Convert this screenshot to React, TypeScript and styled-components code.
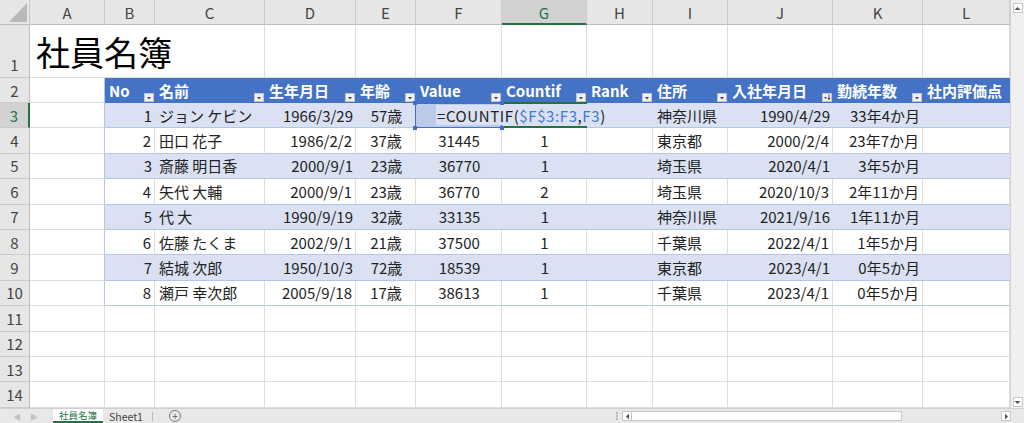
import React from 'react';
import styled, { createGlobalStyle, css } from 'styled-components';

const COLS = [30, 75, 50, 110, 91, 60, 86, 85, 66, 75, 105, 90, 87];
const LETTERS = ['A', 'B', 'C', 'D', 'E', 'F', 'G', 'H', 'I', 'J', 'K', 'L'];
const ROW_H = 25.4;

type Align = 'left' | 'right' | 'center';
type Kind = 'plain' | 'band' | 'white';

// alignment per data column, B..L
const ALIGN: Align[] = ['right', 'left', 'right', 'center', 'center', 'center', 'left', 'left', 'right', 'right', 'left'];

const HEADERS = ['No', '名前', '生年月日', '年齢', 'Value', 'Countif', 'Rank', '住所', '入社年月日', '勤続年数', '社内評価点'];

const ROWS: string[][] = [
  ['1', 'ジョン ケビン', '1966/3/29', '57歳', '', '', '', '神奈川県', '1990/4/29', '33年4か月', ''],
  ['2', '田口 花子', '1986/2/2', '37歳', '31445', '1', '', '東京都', '2000/2/4', '23年7か月', ''],
  ['3', '斎藤 明日香', '2000/9/1', '23歳', '36770', '1', '', '埼玉県', '2020/4/1', '3年5か月', ''],
  ['4', '矢代 大輔', '2000/9/1', '23歳', '36770', '2', '', '埼玉県', '2020/10/3', '2年11か月', ''],
  ['5', '代 大', '1990/9/19', '32歳', '33135', '1', '', '神奈川県', '2021/9/16', '1年11か月', ''],
  ['6', '佐藤 たくま', '2002/9/1', '21歳', '37500', '1', '', '千葉県', '2022/4/1', '1年5か月', ''],
  ['7', '結城 次郎', '1950/10/3', '72歳', '18539', '1', '', '東京都', '2023/4/1', '0年5か月', ''],
  ['8', '瀬戸 幸次郎', '2005/9/18', '17歳', '38613', '1', '', '千葉県', '2023/4/1', '0年5か月', ''],
];

const GRID = '#dedede';
const BAND = '#d9e1f2';
const BAND_LINE = '#b4c6e7';
const HEAD_BLUE = '#4472c4';
const XL_GREEN = '#217346';

const GlobalStyle = createGlobalStyle`
  html, body {
    margin: 0;
    padding: 0;
    background: #fff;
    overflow: hidden;
  }
  body {
    font-family: "Noto Sans CJK JP", "Noto Sans", sans-serif;
  }
`;

const Window = styled.div`
  width: 1024px;
  height: 423px;
  display: flex;
  flex-direction: column;
  overflow: hidden;
`;

const Main = styled.div`
  display: flex;
  height: 408px;
`;

const Sheet = styled.div`
  flex: none;
  width: 1010px;
  display: grid;
  grid-template-columns: ${COLS.map(c => `${c}px`).join(' ')};
  grid-template-rows: 25px 53px 25px repeat(12, ${ROW_H}px);
  overflow: hidden;
`;

const Corner = styled.div`
  background: #e6e6e6;
  border-right: 1px solid #c8c8c8;
  border-bottom: 1px solid #bdbdbd;
  box-sizing: border-box;
  svg {
    display: block;
  }
`;

const ColHead = styled.div<{ $active?: boolean }>`
  box-sizing: border-box;
  background: ${p => (p.$active ? '#d2d2d2' : '#e6e6e6')};
  border-right: 1px solid #cbcbcb;
  border-bottom: ${p => (p.$active ? `2px solid ${XL_GREEN}` : '1px solid #bdbdbd')};
  color: ${p => (p.$active ? XL_GREEN : '#444')};
  font-size: 15px;
  display: flex;
  align-items: center;
  justify-content: center;
  padding-top: ${p => (p.$active ? 1 : 0)}px;
`;

const RowHead = styled.div<{ $active?: boolean; $tall?: boolean }>`
  box-sizing: border-box;
  background: ${p => (p.$active ? '#d2d2d2' : '#e6e6e6')};
  border-right: ${p => (p.$active ? `2px solid ${XL_GREEN}` : '1px solid #bdbdbd')};
  border-bottom: 1px solid #cbcbcb;
  color: ${p => (p.$active ? XL_GREEN : '#444')};
  font-size: 15px;
  display: flex;
  justify-content: center;
  align-items: ${p => (p.$tall ? 'flex-end' : 'center')};
  padding-bottom: ${p => (p.$tall ? 2 : 0)}px;
`;

const Cell = styled.div<{ $kind?: Kind; $align?: Align; $edge?: boolean }>`
  box-sizing: border-box;
  position: relative;
  min-width: 0;
  display: flex;
  align-items: center;
  padding: 0 3px 0 4px;
  font-size: 15px;
  color: #222;
  white-space: nowrap;
  justify-content: ${p => (p.$align === 'right' ? 'flex-end' : p.$align === 'center' ? 'center' : 'flex-start')};
  ${p =>
    p.$kind === 'band'
      ? css`
          background: ${BAND};
          border-bottom: 1px solid ${BAND_LINE};
        `
      : p.$kind === 'white'
      ? css`
          background: #fff;
          border-right: 1px solid ${GRID};
          border-bottom: 1px solid ${BAND_LINE};
        `
      : css`
          background: #fff;
          border-right: 1px solid ${p.$edge ? BAND_LINE : GRID};
          border-bottom: 1px solid ${GRID};
        `}
`;

const TitleCell = styled.div`
  grid-column: span 3;
  box-sizing: border-box;
  border-right: 1px solid ${GRID};
  border-bottom: 1px solid ${GRID};
  display: flex;
  align-items: flex-end;
  padding: 0 0 8px 6px;
  font-size: 34px;
  line-height: 1;
  color: #000;
`;

const HeadCell = styled.div`
  box-sizing: border-box;
  position: relative;
  background: ${HEAD_BLUE};
  color: #fff;
  font-weight: 700;
  font-size: 15px;
  display: flex;
  align-items: center;
  padding: 0 4px;
  white-space: nowrap;
`;

const FilterBtn = styled.div`
  position: absolute;
  right: 1px;
  bottom: 1px;
  width: 10px;
  height: 9px;
  box-sizing: border-box;
  background: #f0f0f0;
  border: 1px solid #c4c4c4;
  svg {
    display: block;
  }
`;

const RefCell = styled(Cell)`
  background: #bccbe9;
  &::after {
    content: '';
    position: absolute;
    inset: 0 0 -1px -1px;
    border: 1px solid #3d6fd1;
  }
`;

const Handle = styled.span<{ $x: 'l' | 'r'; $y: 't' | 'b' }>`
  position: absolute;
  width: 4px;
  height: 4px;
  background: #3d6fd1;
  z-index: 4;
  ${p => (p.$x === 'l' ? 'left: -3px;' : 'right: -2px;')}
  ${p => (p.$y === 't' ? 'top: -2px;' : 'bottom: -3px;')}
`;

const ActiveCell = styled(Cell)`
  &::before,
  &::after {
    content: '';
    position: absolute;
    left: 0;
    right: 0;
    height: 2px;
    background: ${XL_GREEN};
    z-index: 3;
  }
  &::before {
    top: -1px;
  }
  &::after {
    bottom: -1px;
  }
`;

const EditBox = styled.div`
  position: absolute;
  left: 20px;
  top: 2px;
  bottom: 2px;
  width: 180px;
  z-index: 2;
  background: ${BAND};
  display: flex;
  align-items: center;
  padding-left: 1px;
  font-size: 15px;
  letter-spacing: 0.6px;
  color: #222;
  white-space: nowrap;
`;

const Ref = styled.span`
  color: #3e78d6;
`;

const VScroll = styled.div`
  flex: none;
  width: 14px;
  box-sizing: border-box;
  background: #f0f0f0;
  border-left: 1px solid #d2d2d2;
  display: flex;
  flex-direction: column;
  justify-content: space-between;
  align-items: center;
  padding: 3px 0 1px;
`;

const ArrowBtn = styled.div`
  width: 10px;
  height: 10px;
  box-sizing: border-box;
  background: #fff;
  border: 1px solid #c8c8c8;
  display: flex;
  align-items: center;
  justify-content: center;
  svg {
    display: block;
  }
`;

const TabBar = styled.div`
  flex: none;
  height: 15px;
  background: #e8e8e8;
  border-top: 1px solid #d0d0d0;
  box-sizing: border-box;
  display: flex;
  align-items: stretch;
  font-size: 10.5px;
  color: #444;
  white-space: nowrap;
`;

const NavArrows = styled.div`
  width: 53px;
  display: flex;
  align-items: center;
  gap: 9px;
  padding-left: 13px;
  box-sizing: border-box;
  color: #c2c2c2;
  font-size: 8px;
`;

const Tab = styled.div<{ $active?: boolean }>`
  display: flex;
  align-items: center;
  justify-content: center;
  box-sizing: border-box;
  padding: 0 6px;
  ${p =>
    p.$active &&
    css`
      width: 50px;
      padding: 0;
      font-size: 9.5px;
      background: #fff;
      color: ${XL_GREEN};
      border-bottom: 2px solid ${XL_GREEN};
    `}
`;

const TabSep = styled.div`
  width: 1px;
  height: 9px;
  align-self: center;
  background: #bdbdbd;
  margin-left: 3px;
`;

const AddSheet = styled.div`
  width: 10px;
  height: 10px;
  align-self: center;
  margin-left: 16px;
  border: 1px solid #7a7a7a;
  border-radius: 50%;
  display: flex;
  align-items: center;
  justify-content: center;
  font-size: 10px;
  line-height: 1;
  color: #555;
`;

const Grip = styled.div`
  margin-left: auto;
  width: 10px;
  display: flex;
  flex-direction: column;
  align-items: center;
  justify-content: center;
  gap: 1px;
  span {
    width: 2px;
    height: 2px;
    background: #b5b5b5;
  }
`;

const HScroll = styled.div`
  width: 389px;
  display: flex;
  align-items: center;
  margin-right: 13px;
`;

const Thumb = styled.div`
  width: 270px;
  height: 10px;
  box-sizing: border-box;
  background: #fff;
  border: 1px solid #c8c8c8;
  border-left: none;
`;

const Track = styled.div`
  flex: 1;
`;

const Tri = ({ dir, color = '#555' }: { dir: 'up' | 'down' | 'left' | 'right'; color?: string }) => {
  const pts = {
    up: '0.5,4 3.5,1 6.5,4',
    down: '0.5,1 3.5,4 6.5,1',
    left: '4,0.5 1,3.5 4,6.5',
    right: '1,0.5 4,3.5 1,6.5',
  }[dir];
  const w = dir === 'up' || dir === 'down' ? 7 : 5;
  const h = dir === 'up' || dir === 'down' ? 5 : 7;
  return (
    <svg width={w} height={h} viewBox={`0 0 ${w} ${h}`}>
      <polygon points={pts} fill={color} />
    </svg>
  );
};

const FilterIcon = ({ sorted }: { sorted?: boolean }) =>
  sorted ? (
    <svg width="8" height="7" viewBox="0 0 8 7">
      <polygon points="1,3 4,3 2.5,5" fill="#444" />
      <rect x="5.5" y="0.5" width="1" height="5" fill="#444" />
      <polygon points="4.5,4 7.5,4 6,6" fill="#444" />
    </svg>
  ) : (
    <svg width="8" height="7" viewBox="0 0 8 7">
      <polygon points="2,3 6,3 4,5.5" fill="#444" />
    </svg>
  );

const App: React.FC = () => {
  const rows: React.ReactNode[] = [];

  // column letters
  rows.push(
    <Corner key="corner">
      <svg width="29" height="24" viewBox="0 0 29 24">
        <polygon points="9,22 27,22 27,3" fill="#b9b9b9" />
      </svg>
    </Corner>
  );
  LETTERS.forEach(l =>
    rows.push(
      <ColHead key={`h${l}`} $active={l === 'G'}>
        {l}
      </ColHead>
    )
  );

  for (let r = 1; r <= 14; r++) {
    rows.push(
      <RowHead key={`r${r}`} $active={r === 3} $tall={r === 1}>
        {r}
      </RowHead>
    );

    if (r === 1) {
      rows.push(<TitleCell key="title">社員名簿</TitleCell>);
      for (let c = 3; c < 12; c++) rows.push(<Cell key={`1-${c}`} />);
      continue;
    }

    if (r === 2) {
      rows.push(<Cell key="2-0" $edge />);
      HEADERS.forEach((h, i) =>
        rows.push(
          <HeadCell key={`th${i}`}>
            {h}
            {i < 10 && (
              <FilterBtn>
                <FilterIcon sorted={i === 8} />
              </FilterBtn>
            )}
          </HeadCell>
        )
      );
      continue;
    }

    if (r <= 10) {
      const data = ROWS[r - 3];
      const kind: Kind = r % 2 === 1 ? 'band' : 'white';
      rows.push(<Cell key={`${r}-0`} $edge />);
      data.forEach((v, i) => {
        const key = `${r}-${i + 1}`;
        if (r === 3 && i === 4) {
          rows.push(
            <RefCell key={key} $kind={kind}>
              <Handle $x="l" $y="t" />
              <Handle $x="r" $y="t" />
              <Handle $x="l" $y="b" />
              <Handle $x="r" $y="b" />
              <EditBox>
                =COUNTIF(<Ref>$F$3:F3</Ref>,<Ref>F3</Ref>)
              </EditBox>
            </RefCell>
          );
        } else if (r === 3 && i === 5) {
          rows.push(<ActiveCell key={key} $kind={kind} />);
        } else {
          rows.push(
            <Cell key={key} $kind={kind} $align={ALIGN[i]}>
              {v}
            </Cell>
          );
        }
      });
      continue;
    }

    for (let c = 0; c < 12; c++) rows.push(<Cell key={`${r}-${c}`} />);
  }

  return (
    <>
      <GlobalStyle />
      <Window>
        <Main>
          <Sheet>{rows}</Sheet>
          <VScroll>
            <ArrowBtn>
              <Tri dir="up" />
            </ArrowBtn>
            <ArrowBtn>
              <Tri dir="down" />
            </ArrowBtn>
          </VScroll>
        </Main>
        <TabBar>
          <NavArrows>
            <span>◀</span>
            <span>▶</span>
          </NavArrows>
          <Tab $active>社員名簿</Tab>
          <Tab>Sheet1</Tab>
          <TabSep />
          <AddSheet>+</AddSheet>
          <Grip>
            <span />
            <span />
            <span />
          </Grip>
          <HScroll>
            <ArrowBtn>
              <Tri dir="left" />
            </ArrowBtn>
            <Thumb />
            <Track />
            <ArrowBtn>
              <Tri dir="right" />
            </ArrowBtn>
          </HScroll>
        </TabBar>
      </Window>
    </>
  );
};

export default App;
